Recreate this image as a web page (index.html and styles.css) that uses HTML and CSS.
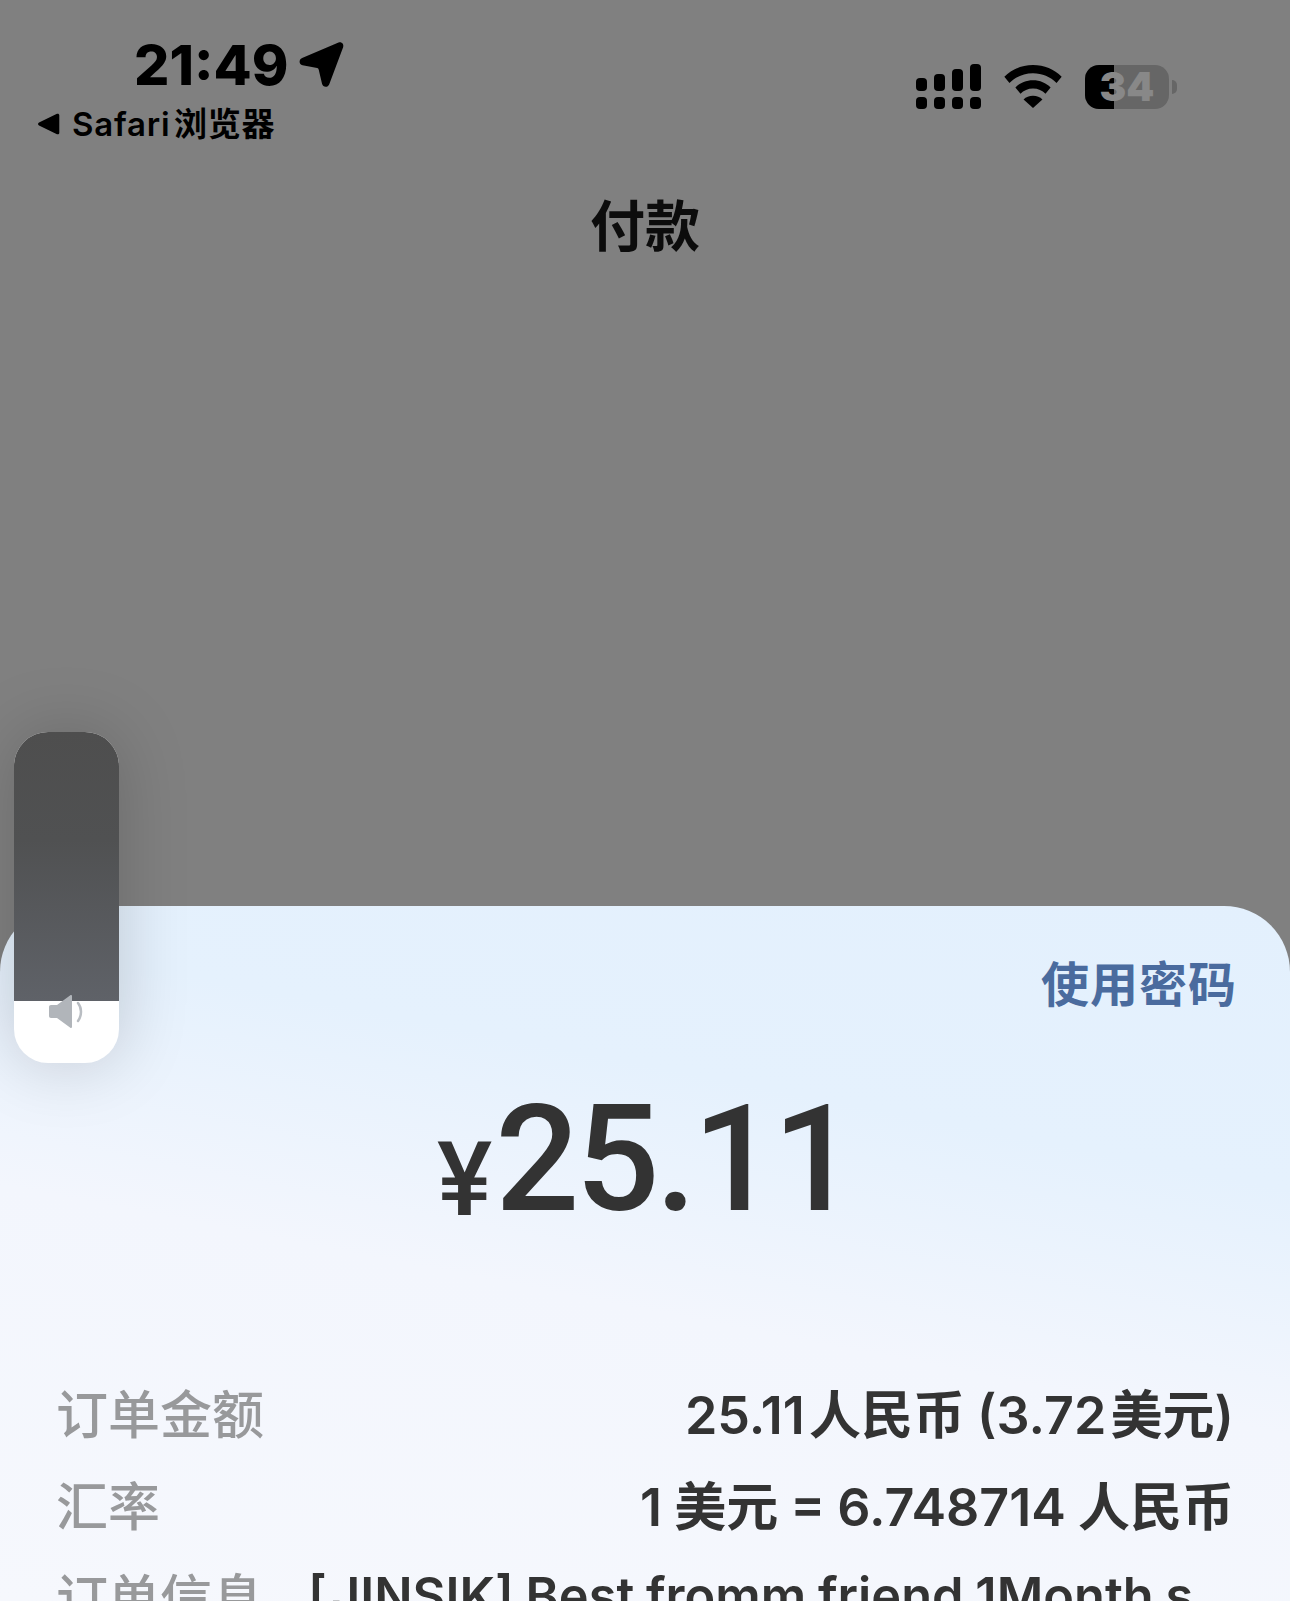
FILE: index.html
```html
<!DOCTYPE html>
<html lang="zh-CN">

<head>
    <meta charset="UTF-8">
    <title>付款</title>
    <link rel="stylesheet" href="styles.css">
</head>

<body>
    <div class="page">
        <div class="top">
            <div class="status">
                <div class="status-left">
                    <div class="clock">
                        <span class="time">21:49</span>
                        <svg class="arrow" width="49" height="49" viewBox="0 0 46 46">
                            <path d="M39 1.500c2.800-1 5.300 1.500 4.300 4.400L30.300 40.500c-1.200 3.300-6 3.200-6.800-.3l-3.100-13.300c-.2-.8-.7-1.300-1.500-1.500L5.200 22.700c-3.500-.8-3.700-5.500-.4-6.800z" fill="#000" />
                        </svg>
                    </div>
                    <div class="back">
                        <svg class="back-icon" width="22" height="22" viewBox="0 0 22 22">
                            <path d="M1 9.500 19 .8c1.200-.5 2.300.2 2.300 1.500v17.400c0 1.300-1.100 2-2.300 1.500L1 12.500c-1.300-.6-1.300-2.400 0-3z" fill="#000" />
                        </svg>
                        <span>Safari&#8202;浏览器</span>
                    </div>
                </div>
                <div class="status-right">
                    <svg width="65" height="45" viewBox="0 0 65 45">
                        <rect x="0" y="14" width="11" height="13" rx="4" />
                        <rect x="18" y="10" width="11" height="17" rx="4" />
                        <rect x="36" y="5" width="11" height="22" rx="4" />
                        <rect x="54" y="0" width="11" height="27" rx="4" />
                        <rect x="0" y="33" width="11" height="12" rx="4" />
                        <rect x="18" y="33" width="11" height="12" rx="4" />
                        <rect x="36" y="33" width="11" height="12" rx="4" />
                        <rect x="54" y="33" width="11" height="12" rx="4" />
                    </svg>
                    <svg class="wifi" width="60" height="43" viewBox="0 0 58 42">
                        <path d="M29 0C18 0 8.300 4.200 1 11.500l5 6C12 11.500 20 8 29 8s17 3.500 23 9.500l5-6C49.700 4.200 40 0 29 0z" />
                        <path d="M29 15c-6.800 0-12.700 2.600-17.200 7l5 6c3.100-3 7.300-5 12.200-5s9.100 2 12.200 5l5-6C41.700 17.600 35.800 15 29 15z" />
                        <path d="M29 30c-3.700 0-6.800 1.300-9.200 3.600L29 42l9.200-8.400C35.800 31.300 32.700 30 29 30z" />
                    </svg>
                    <div class="battery">
                        <div class="battery-body">
                            <div class="battery-fill"></div>
                            <span class="battery-num">34</span>
                        </div>
                        <div class="battery-cap"></div>
                    </div>
                </div>
            </div>
            <h1 class="title">付款</h1>
        </div>

        <div class="sheet">
            <a href="#" class="use-pwd">使用密码</a>
            <div class="amount"><span class="yen">¥</span>25.11</div>
            <div class="row">
                <span class="label">订单金额</span>
                <span class="value">25.11&#8202;人民币 (3.72&#8202;美元)</span>
            </div>
            <div class="row">
                <span class="label">汇率</span>
                <span class="value">1 美元 = 6.748714 人民币</span>
            </div>
            <div class="row row-info">
                <span class="label">订单信息</span>
                <span class="value">[&#8202;JINSIK] Best fromm friend 1Month s</span>
            </div>
        </div>

        <div class="volume">
            <div class="volume-level"></div>
            <svg class="speaker" width="36" height="34" viewBox="0 0 36 34">
                <path d="M2 10h6l13-9.500c1.200-.8 2-.3 2 1v30c0 1.500-.9 2-2 1L8 23H2c-1.200 0-2-.8-2-2v-9c0-1.200.8-2 2-2z" fill="#b1b5ba" />
                <path d="M29 8c4 5 4 12.500 0 18" fill="none" stroke="#b9bdc2" stroke-width="2.500" stroke-linecap="round" />
            </svg>
        </div>
    </div>
</body>

</html>
```

FILE: styles.css
```css
* {
    margin: 0;
    padding: 0;
    box-sizing: border-box;
}

a {
    text-decoration: none;
}

body {
    background-color: #808080;
    font-family: "Inter", "Noto Sans CJK SC", sans-serif;
}

.page {
    position: relative;
    width: 1290px;
    height: 1601px;
    overflow: hidden;
    background-color: #808080;
}

.top {
    height: 906px;
}

.status {
    display: flex;
    justify-content: space-between;
    padding: 33px 113px 0 38px;
    color: #000;
}

.clock {
    display: flex;
    align-items: center;
    margin-left: 96px;
    height: 64px;
}

.time {
    font-size: 55.500px;
    font-weight: 800;
    line-height: 64px;
}

.arrow {
    margin-left: 9px;
}

.back {
    display: flex;
    align-items: center;
    height: 44px;
    margin-top: 3px;
    font-size: 33px;
    font-weight: 600;
    letter-spacing: .8px;
}

.back-icon {
    margin-top: 3px;
    margin-right: 12px;
}

.status-right {
    display: flex;
    align-items: center;
    height: 45px;
    margin-top: 31px;
}

.status-right svg {
    fill: #000;
}

.wifi {
    margin-left: 22px;
}

.battery {
    display: flex;
    align-items: center;
    margin-left: 22px;
}

.battery-body {
    position: relative;
    width: 84px;
    height: 44px;
    border-radius: 14px;
    background-color: #666;
    text-align: center;
}

.battery-fill {
    width: 29px;
    height: 100%;
    border-radius: 14px 0 0 14px;
    background-color: #000;
}

.battery-num {
    position: absolute;
    top: 0;
    left: 0;
    width: 100%;
    font-size: 40px;
    font-weight: 900;
    line-height: 44px;
    color: #888;
}

.battery-cap {
    width: 5px;
    height: 14px;
    margin-left: 3px;
    border-radius: 0 5px 5px 0;
    background-color: #666;
}

.title {
    margin-top: 48px;
    text-align: center;
    font-size: 55px;
    font-weight: 700;
    line-height: 68px;
    color: #0c0c0c;
}

.sheet {
    height: 695px;
    padding: 48px 56px 0;
    border-radius: 66px 66px 0 0;
    background: linear-gradient(191deg, #e3f0fd 0%, #e5f1fd 30%, #f3f6fd 56%, #f6f8fd 100%);
    overflow: hidden;
}

.use-pwd {
    display: block;
    margin-right: -3px;
    text-align: right;
    font-size: 48px;
    font-weight: 600;
    line-height: 62px;
    letter-spacing: 1px;
    color: #4a6b9e;
}

.amount {
    margin-top: 54px;
    text-align: center;
    font-family: "Roboto", sans-serif;
    font-size: 148px;
    font-weight: 500;
    line-height: 180px;
    letter-spacing: -4px;
    color: #333;
}

.yen {
    font-size: 104px;
    font-weight: 500;
    line-height: 1;
    letter-spacing: 3px;
    vertical-align: -5px;
}

.row {
    display: flex;
    justify-content: space-between;
    align-items: center;
    height: 92px;
    white-space: nowrap;
}

.amount + .row {
    margin-top: 115px;
}

.label {
    font-size: 52px;
    font-weight: 500;
    color: #98999b;
}

.value {
    font-size: 52px;
    font-weight: 600;
    word-spacing: -1px;
    color: #333;
}

.row-info {
    justify-content: flex-start;
    gap: 44px;
}

.row-info .value {
    font-size: 50.500px;
}

/* 音量浮层 */
.volume {
    position: absolute;
    top: 732px;
    left: 14px;
    width: 105px;
    height: 331px;
    border-radius: 34px;
    background-color: #fff;
    box-shadow: 0 0 70px rgba(0, 0, 0, .18);
    overflow: hidden;
}

.volume-level {
    height: 269px;
    background: linear-gradient(180deg, #4e4e4e 0%, #505152 40%, #5f6268 100%);
}

.speaker {
    position: absolute;
    top: 263px;
    left: 35px;
}
```
